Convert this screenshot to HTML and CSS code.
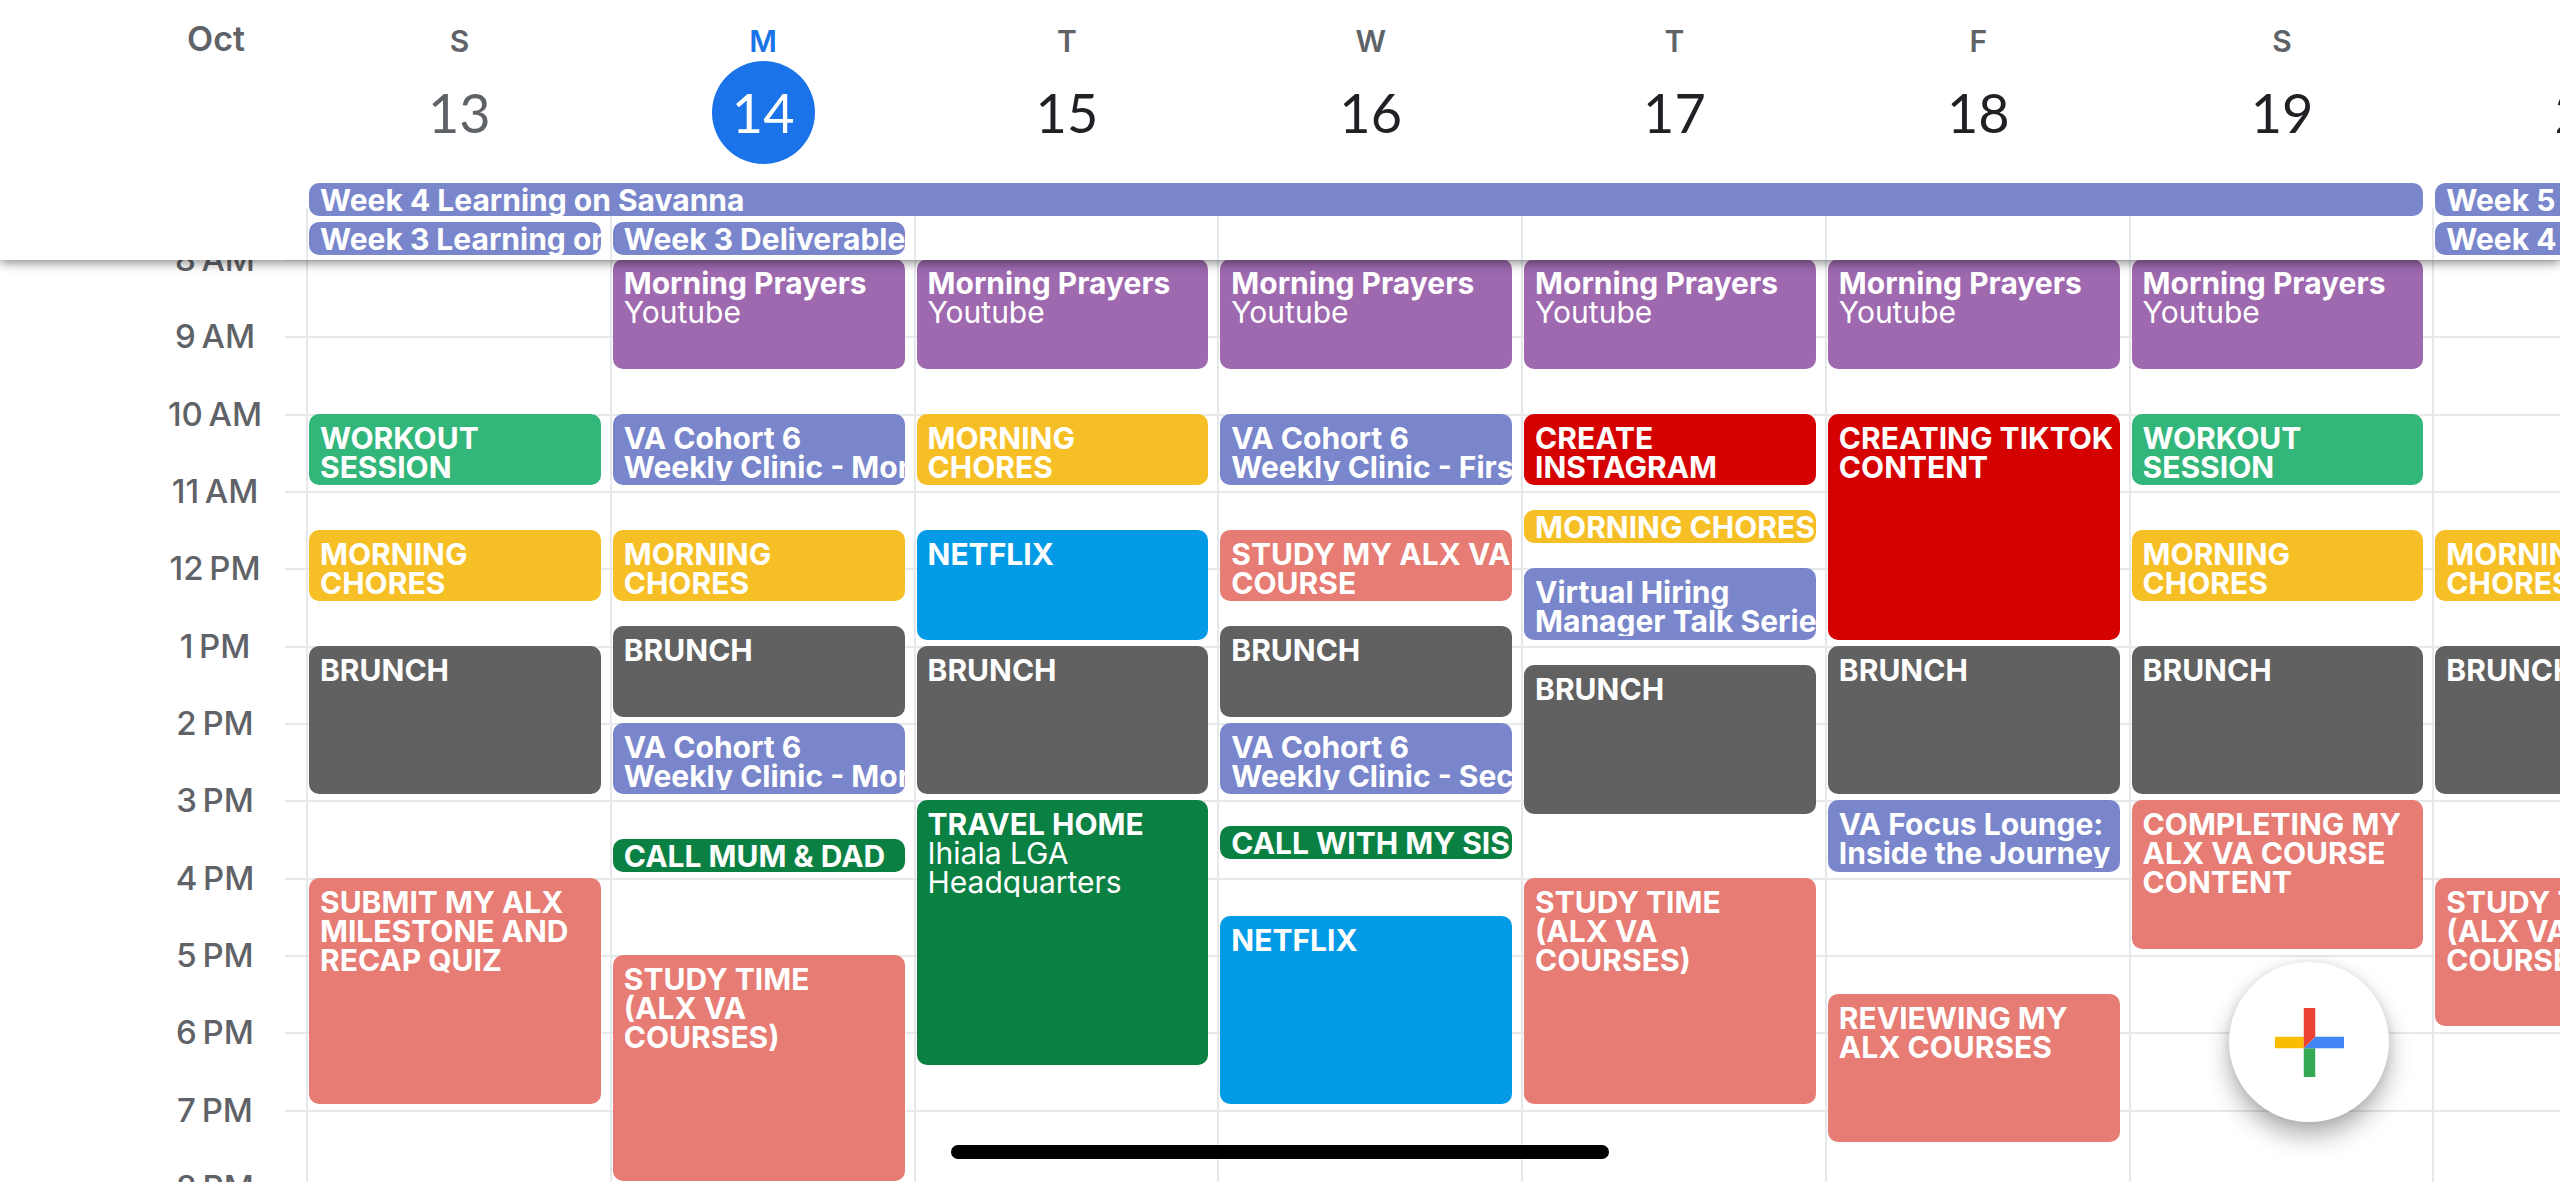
FILE: index.html
```html
<!DOCTYPE html>
<html lang="en">
<head>
<meta charset="utf-8">
<meta name="viewport" content="width=device-width, initial-scale=1">
<title>Calendar – October</title>
<link rel="stylesheet" href="styles.css">
</head>
<body>
<header class="header">
  <h1 class="month">Oct</h1>
  <div class="header-days">
    <div class="columns dates">
      <div class="date past"><span class="weekday">S</span><span class="number">13</span></div>
      <div class="date today"><span class="weekday">M</span><span class="number">14</span></div>
      <div class="date"><span class="weekday">T</span><span class="number">15</span></div>
      <div class="date"><span class="weekday">W</span><span class="number">16</span></div>
      <div class="date"><span class="weekday">T</span><span class="number">17</span></div>
      <div class="date"><span class="weekday">F</span><span class="number">18</span></div>
      <div class="date"><span class="weekday">S</span><span class="number">19</span></div>
      <div class="date"><span class="weekday">S</span><span class="number">20</span></div>
    </div>
    <div class="columns allday">
      <i class="rule"></i><i class="rule"></i><i class="rule"></i><i class="rule"></i><i class="rule"></i><i class="rule"></i><i class="rule"></i><i class="rule"></i>
      <div class="bar" style="grid-area: 1 / 1 / 2 / span 7">Week 4 Learning on Savanna</div>
      <div class="bar" style="grid-area: 1 / 8">Week 5 Learning on Savanna</div>
      <div class="bar" style="grid-area: 2 / 1">Week 3 Learning on Savanna</div>
      <div class="bar" style="grid-area: 2 / 2">Week 3 Deliverables</div>
      <div class="bar" style="grid-area: 2 / 8">Week 4 Deliverables</div>
    </div>
  </div>
</header>

<main class="board">
  <div class="lines"><i></i><i></i><i></i><i></i><i></i><i></i><i></i><i></i><i></i><i></i><i></i><i></i></div>
  <div class="hours">
    <span>8&#8201;AM</span><span>9&#8201;AM</span><span>10&#8201;AM</span><span>11&#8201;AM</span><span>12&#8201;PM</span><span>1&#8201;PM</span><span>2&#8201;PM</span><span>3&#8201;PM</span><span>4&#8201;PM</span><span>5&#8201;PM</span><span>6&#8201;PM</span><span>7&#8201;PM</span><span>8&#8201;PM</span>
  </div>
  <div class="columns days">
    <section class="day">
      <div class="event sage" style="grid-row: 25 / span 12"><p class="text"><b>WORKOUT</b><b>SESSION</b></p></div>
      <div class="event banana" style="grid-row: 43 / span 12"><p class="text"><b>MORNING</b><b>CHORES</b></p></div>
      <div class="event graphite" style="grid-row: 61 / span 24"><p class="text"><b>BRUNCH</b></p></div>
      <div class="event flamingo" style="grid-row: 97 / span 36"><p class="text"><b>SUBMIT MY ALX</b><b>MILESTONE AND</b><b>RECAP QUIZ</b></p></div>
    </section>
    <section class="day">
      <div class="event grape" style="grid-row: 1 / span 18"><p class="text"><b>Morning Prayers</b><span>Youtube</span></p></div>
      <div class="event lavender" style="grid-row: 25 / span 12"><p class="text"><b>VA Cohort 6</b><b>Weekly Clinic - Monday</b></p></div>
      <div class="event banana" style="grid-row: 43 / span 12"><p class="text"><b>MORNING</b><b>CHORES</b></p></div>
      <div class="event graphite" style="grid-row: 58 / span 15"><p class="text"><b>BRUNCH</b></p></div>
      <div class="event lavender" style="grid-row: 73 / span 12"><p class="text"><b>VA Cohort 6</b><b>Weekly Clinic - Monday</b></p></div>
      <div class="event basil short" style="grid-row: 91 / span 6"><p class="text"><b>CALL MUM &amp; DAD</b></p></div>
      <div class="event flamingo" style="grid-row: 109 / span 36"><p class="text"><b>STUDY TIME</b><b>(ALX VA</b><b>COURSES)</b></p></div>
    </section>
    <section class="day">
      <div class="event grape" style="grid-row: 1 / span 18"><p class="text"><b>Morning Prayers</b><span>Youtube</span></p></div>
      <div class="event banana" style="grid-row: 25 / span 12"><p class="text"><b>MORNING</b><b>CHORES</b></p></div>
      <div class="event peacock" style="grid-row: 43 / span 18"><p class="text"><b>NETFLIX</b></p></div>
      <div class="event graphite" style="grid-row: 61 / span 24"><p class="text"><b>BRUNCH</b></p></div>
      <div class="event basil" style="grid-row: 85 / span 42"><p class="text"><b>TRAVEL HOME</b><span>Ihiala LGA</span><span>Headquarters</span></p></div>
    </section>
    <section class="day">
      <div class="event grape" style="grid-row: 1 / span 18"><p class="text"><b>Morning Prayers</b><span>Youtube</span></p></div>
      <div class="event lavender" style="grid-row: 25 / span 12"><p class="text"><b>VA Cohort 6</b><b>Weekly Clinic - First</b></p></div>
      <div class="event flamingo" style="grid-row: 43 / span 12"><p class="text"><b>STUDY MY ALX VA</b><b>COURSE</b></p></div>
      <div class="event graphite" style="grid-row: 58 / span 15"><p class="text"><b>BRUNCH</b></p></div>
      <div class="event lavender" style="grid-row: 73 / span 12"><p class="text"><b>VA Cohort 6</b><b>Weekly Clinic - Second</b></p></div>
      <div class="event basil short" style="grid-row: 89 / span 6"><p class="text"><b>CALL WITH MY SIS</b></p></div>
      <div class="event peacock" style="grid-row: 103 / span 30"><p class="text"><b>NETFLIX</b></p></div>
    </section>
    <section class="day">
      <div class="event grape" style="grid-row: 1 / span 18"><p class="text"><b>Morning Prayers</b><span>Youtube</span></p></div>
      <div class="event tomato" style="grid-row: 25 / span 12"><p class="text"><b>CREATE</b><b>INSTAGRAM</b></p></div>
      <div class="event banana short" style="grid-row: 40 / span 6"><p class="text"><b>MORNING CHORES</b></p></div>
      <div class="event lavender" style="grid-row: 49 / span 12"><p class="text"><b>Virtual Hiring</b><b>Manager Talk Series</b></p></div>
      <div class="event graphite" style="grid-row: 64 / span 24"><p class="text"><b>BRUNCH</b></p></div>
      <div class="event flamingo" style="grid-row: 97 / span 36"><p class="text"><b>STUDY TIME</b><b>(ALX VA</b><b>COURSES)</b></p></div>
    </section>
    <section class="day">
      <div class="event grape" style="grid-row: 1 / span 18"><p class="text"><b>Morning Prayers</b><span>Youtube</span></p></div>
      <div class="event tomato" style="grid-row: 25 / span 36"><p class="text"><b>CREATING TIKTOK</b><b>CONTENT</b></p></div>
      <div class="event graphite" style="grid-row: 61 / span 24"><p class="text"><b>BRUNCH</b></p></div>
      <div class="event lavender" style="grid-row: 85 / span 12"><p class="text"><b>VA Focus Lounge:</b><b>Inside the Journey</b></p></div>
      <div class="event flamingo" style="grid-row: 115 / span 24"><p class="text"><b>REVIEWING MY</b><b>ALX COURSES</b></p></div>
    </section>
    <section class="day">
      <div class="event grape" style="grid-row: 1 / span 18"><p class="text"><b>Morning Prayers</b><span>Youtube</span></p></div>
      <div class="event sage" style="grid-row: 25 / span 12"><p class="text"><b>WORKOUT</b><b>SESSION</b></p></div>
      <div class="event banana" style="grid-row: 43 / span 12"><p class="text"><b>MORNING</b><b>CHORES</b></p></div>
      <div class="event graphite" style="grid-row: 61 / span 24"><p class="text"><b>BRUNCH</b></p></div>
      <div class="event flamingo" style="grid-row: 85 / span 24"><p class="text"><b>COMPLETING MY</b><b>ALX VA COURSE</b><b>CONTENT</b></p></div>
    </section>
    <section class="day">
      <div class="event banana" style="grid-row: 43 / span 12"><p class="text"><b>MORNING</b><b>CHORES</b></p></div>
      <div class="event graphite" style="grid-row: 61 / span 24"><p class="text"><b>BRUNCH</b></p></div>
      <div class="event flamingo" style="grid-row: 97 / span 24"><p class="text"><b>STUDY TIME</b><b>(ALX VA</b><b>COURSES)</b></p></div>
    </section>
  </div>
</main>

<button class="create" type="button" aria-label="Create event">
  <svg viewBox="0 0 24 24" aria-hidden="true">
    <path fill="#fbbc04" d="M0 10h10v4H0z"/>
    <path fill="#34a853" d="M10 14h4v10h-4z"/>
    <path fill="#4285f4" d="M14 10h10v4H10z"/>
    <path fill="#ea4335" d="M10 0h4v10l-4 4z"/>
  </svg>
</button>
<div class="home-indicator"></div>
</body>
</html>
```

FILE: styles.css
```css
:root {
  --gutter: 306px;
  --rule: #e6e8eb;
  --muted: #5f6368;
  --ink: #202124;
  --blue: #1a73e8;
}

* {
  box-sizing: border-box;
}

body {
  margin: 0;
  height: 100vh;
  overflow: hidden;
  display: flex;
  flex-direction: column;
  background: #fff;
  color: var(--muted);
  font-family: Inter, "Liberation Sans", sans-serif;
}

/* Seven full days and the beginning of the next one */
.columns {
  display: grid;
  grid-auto-flow: column;
  grid-auto-columns: calc(100% / 7.42);
}

/* Header */
.header {
  position: relative;
  z-index: 2;
  display: grid;
  grid-template-columns: var(--gutter) minmax(0, 1fr);
  margin-bottom: -1px;
  background: #fff;
  box-shadow: 0 3px 10px rgba(0, 0, 0, 0.45);
}

.header-days {
  min-width: 0;
  overflow: hidden;
}

.month {
  margin: 0;
  padding: 19px 0 0 126px;
  font-size: 34px;
  font-weight: 600;
  line-height: 40px;
  text-align: center;
}

.dates {
  padding-top: 21px;
}

.date {
  display: flex;
  flex-direction: column;
  align-items: center;
  padding-left: 3px;
  color: var(--ink);
}

.weekday {
  color: var(--muted);
  font-size: 30px;
  font-weight: 600;
  line-height: 40px;
}

.number {
  width: 103px;
  border-radius: 50%;
  font-family: Lato, sans-serif;
  font-size: 54px;
  line-height: 103px;
  text-align: center;
}

.past .number {
  color: var(--muted);
}

.today .weekday {
  color: var(--blue);
}

.today .number {
  background: var(--blue);
  color: #fff;
}

.allday {
  margin-top: 19px;
  grid-template-rows: 39px 38px;
}

.rule {
  grid-row: 1 / 3;
  margin-top: 25px;
  border-left: 2px solid var(--rule);
}

.rule:nth-child(1) { grid-column: 1; }
.rule:nth-child(2) { grid-column: 2; }
.rule:nth-child(3) { grid-column: 3; }
.rule:nth-child(4) { grid-column: 4; }
.rule:nth-child(5) { grid-column: 5; }
.rule:nth-child(6) { grid-column: 6; }
.rule:nth-child(7) { grid-column: 7; }
.rule:nth-child(8) { grid-column: 8; }

.bar {
  height: 33px;
  margin: 0 9px 0 3px;
  padding-left: 11px;
  overflow: hidden;
  border-radius: 10px;
  background: #7986cb;
  color: #fff;
  font-size: 30px;
  font-weight: 700;
  line-height: 34px;
  white-space: nowrap;
}

/* Timetable: 8 AM to 8 PM */
.board {
  flex: 1;
  min-height: 0;
  overflow: hidden;
  display: grid;
  grid-template-columns: var(--gutter) minmax(0, 1fr);
  grid-template-rows: 928px;
}

.lines {
  grid-area: 1 / 1 / 2 / 3;
  display: grid;
  grid-template-rows: repeat(12, 1fr);
  margin-left: 285px;
}

.lines i {
  border-top: 2px solid var(--rule);
}

.hours {
  grid-area: 1 / 1;
  display: grid;
  grid-template-rows: repeat(12, minmax(0, 1fr));
  grid-auto-rows: 0;
  padding-left: 124px;
  font-size: 33px;
  font-weight: 500;
  line-height: 32px;
  text-align: center;
}

.hours span {
  margin-top: -16px;
}

.days {
  grid-area: 1 / 2;
  grid-template-rows: minmax(0, 1fr);
}

/* One grid row for every five minutes */
.day {
  display: grid;
  grid-template-rows: repeat(144, minmax(0, 1fr));
  border-left: 2px solid var(--rule);
}

.event {
  display: flex;
  flex-direction: column;
  min-width: 0;
  margin: 0 9px 6px 1px;
  padding: 10px 0 4px 11px;
  overflow: hidden;
  border-radius: 10px;
  color: #fff;
  font-size: 30px;
  font-weight: 400;
  line-height: 29px;
  white-space: nowrap;
}

.short {
  padding: 3px 0 0 11px;
}

.text {
  min-height: 0;
  margin: 0;
  overflow: hidden;
}

.text b,
.text span {
  display: block;
}

.text b {
  font-weight: 700;
}

.lavender { background: #7986cb; }
.grape { background: #9e69af; }
.sage { background: #33b679; }
.banana { background: #f6bf26; }
.graphite { background: #616161; }
.flamingo { background: #e67c73; }
.basil { background: #0b8043; }
.peacock { background: #039be5; }
.tomato { background: #d50000; }

/* Floating controls */
.create {
  position: fixed;
  right: 171px;
  bottom: 60px;
  z-index: 3;
  display: grid;
  place-items: center;
  width: 160px;
  height: 160px;
  padding: 0;
  border: 0;
  border-radius: 50%;
  background: #fff;
  box-shadow: 0 14px 24px rgba(0, 0, 0, 0.3), 0 0 12px rgba(0, 0, 0, 0.1);
}

.create svg {
  width: 69px;
  height: 69px;
}

.home-indicator {
  position: fixed;
  bottom: 23px;
  left: 50%;
  z-index: 3;
  width: 658px;
  height: 14px;
  border-radius: 7px;
  background: #000;
  transform: translateX(-50%);
}
```
